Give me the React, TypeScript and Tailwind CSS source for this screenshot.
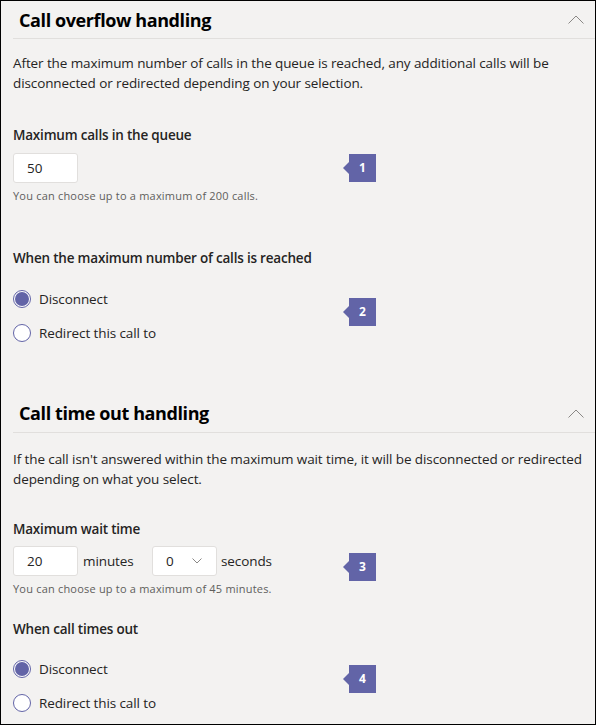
import React from "react";

const font = { fontFamily: '"Open Sans", "Noto Sans", Arial, sans-serif' };

function Badge({ n, top }: { n: string; top: string }) {
  return (
    <div className={`absolute left-[330px] ${top} flex items-center`}>
      <div className="w-0 h-0 border-y-[6px] border-y-transparent border-r-[6px] border-r-[#6264a7]" />
      <div className="w-[27px] h-[28px] bg-[#6264a7] text-white text-[12px] font-bold flex items-center justify-center">
        {n}
      </div>
    </div>
  );
}

function Chevron() {
  return (
    <svg width="16" height="9" viewBox="0 0 16 9" className="block">
      <polyline points="0.5,8.5 8,1 15.5,8.5" fill="none" stroke="#8a8886" strokeWidth="1" />
    </svg>
  );
}

function Radio({ checked, label }: { checked?: boolean; label: string }) {
  return (
    <div className="h-[34px] flex items-center gap-[8px]">
      <div className="w-[18px] h-[18px] rounded-full border border-[#6264a7] bg-white p-[1px] flex">
        {checked && <div className="flex-1 rounded-full bg-[#6264a7]" />}
      </div>
      <span className="text-[13.5px] tracking-[-0.1px] text-[#252423] leading-[20px]">{label}</span>
    </div>
  );
}

function Header({ title, h }: { title: string; h: string }) {
  return (
    <div className={`${h} flex items-center justify-between border-b border-[#e1dfdd] pl-[6px] pr-[11px]`}>
      <h2 className="text-[18px] tracking-[-0.4px] font-bold text-black leading-[24px]">{title}</h2>
      <Chevron />
    </div>
  );
}

const body = "text-[13.5px] tracking-[-0.1px] leading-[20px]";
const label = "text-[13.5px] tracking-[-0.2px] leading-[20px] font-semibold";
const helper = "text-[11px] tracking-[0.2px] leading-[16px] text-[#605e5c]";
const box =
  "w-[65px] h-[30px] bg-white border border-[#e1dfdd] rounded-[3px] pl-[13px] flex items-center text-[13.5px]";

export default function App() {
  return (
    <div
      style={font}
      className="w-[596px] h-[725px] border border-black bg-[#f3f2f1] text-[#252423] overflow-hidden"
    >
      <div className="pl-[12px]">
        {/* Section 1 */}
        <Header title="Call overflow handling" h="h-[38px]" />
        <div className="pr-[12px]">
          <p className={`mt-[14px] ${body}`}>
            After the maximum number of calls in the queue is reached, any additional calls will be disconnected or redirected depending on your selection.
          </p>
          <div className={`mt-[32px] ${label}`}>Maximum calls in the queue</div>
          <div className="relative mt-[8px] flex items-center">
            <div className={box}>50</div>
            <Badge n="1" top="top-[1px]" />
          </div>
          <div className={`mt-[5px] ${helper}`}>You can choose up to a maximum of 200 calls.</div>
          <div className={`mt-[44px] ${label}`}>When the maximum number of calls is reached</div>
          <div className="relative mt-[14px]">
            <Radio checked label="Disconnect" />
            <Radio label="Redirect this call to" />
            <Badge n="2" top="top-[16px]" />
          </div>
        </div>

        {/* Section 2 */}
        <div className="mt-[44px]">
          <Header title="Call time out handling" h="h-[39px]" />
        </div>
        <div className="pr-[12px]">
          <p className={`mt-[16px] ${body}`}>
            If the call isn't answered within the maximum wait time, it will be disconnected or redirected depending on what you select.
          </p>
          <div className={`mt-[30px] ${label}`}>Maximum wait time</div>
          <div className="relative mt-[7px] flex items-center">
            <div className={box}>20</div>
            <span className="ml-[5px] text-[13.5px] tracking-[-0.1px]">minutes</span>
            <div className="absolute left-[139px] top-0 w-[65px] h-[30px] bg-white border border-[#e1dfdd] rounded-[3px] pl-[13px] pr-[14px] flex items-center justify-between text-[13.5px]">
              <span>0</span>
              <svg width="10" height="6" viewBox="0 0 10 6" className="block">
                <polyline points="0.5,0.5 5,5 9.5,0.5" fill="none" stroke="#8a8886" strokeWidth="1" />
              </svg>
            </div>
            <span className="absolute left-[208px] text-[13.5px] tracking-[-0.1px]">seconds</span>
            <Badge n="3" top="top-[7px]" />
          </div>
          <div className={`mt-[5px] ${helper}`}>You can choose up to a maximum of 45 minutes.</div>
          <div className={`mt-[22px] ${label}`}>When call times out</div>
          <div className="relative mt-[13px]">
            <Radio checked label="Disconnect" />
            <Radio label="Redirect this call to" />
            <Badge n="4" top="top-[13px]" />
          </div>
        </div>
      </div>
    </div>
  );
}
